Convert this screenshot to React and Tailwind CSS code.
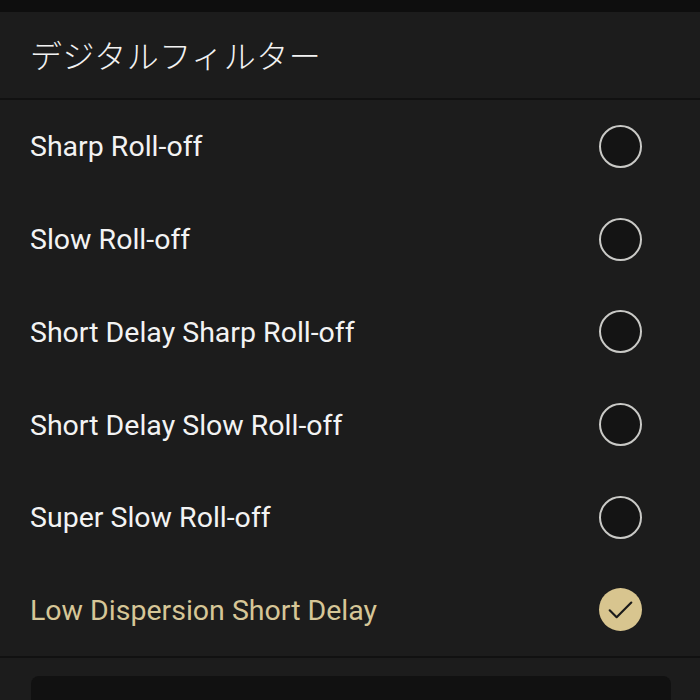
const FILTERS = [
  'Sharp Roll-off',
  'Slow Roll-off',
  'Short Delay Sharp Roll-off',
  'Short Delay Slow Roll-off',
  'Super Slow Roll-off',
  'Low Dispersion Short Delay',
]

function Radio({ checked }) {
  if (checked) {
    return (
      <div className="w-[43px] h-[43px] rounded-full bg-[#d8c58f] flex items-center justify-center">
        <svg width="37" height="37" viewBox="0 0 24 24" fill="none" stroke="#1a1a1a" strokeWidth="1.4" strokeLinecap="round" strokeLinejoin="round">
          <path d="M5 12.5l4.5 4.5L19 7.5" />
        </svg>
      </div>
    )
  }
  return <div className="w-[43px] h-[43px] rounded-full border-2 border-[#c9c9c6] bg-[#141414]" />
}

export default function App() {
  const selected = 5
  return (
    <div className="w-[700px] h-[700px] bg-[#0e0e0e] overflow-hidden font-['Roboto','Noto_Sans_CJK_JP',sans-serif]">
      <div className="h-[12px]" />
      <div className="bg-[#1c1c1c] h-[688px] flex flex-col">
        <div className="h-[88px] shrink-0 flex items-center px-[30px] pb-[3px] border-b-2 border-[#111111]">
          <span className="text-[32px] text-[#f2f2f2] font-light tracking-[0.5px] font-['Noto_Sans_CJK_JP',sans-serif]">デジタルフィルター</span>
        </div>
        <div className="flex flex-col shrink-0">
          {FILTERS.map((f, i) => (
            <div key={f} className="h-[92.7px] shrink-0 flex items-center justify-between pl-[30px] pr-[58px]">
              <span className={`text-[28.5px] pt-[3px] ${i === selected ? 'text-[#d6c697]' : 'text-[#f3f3f3]'}`}>{f}</span>
              <Radio checked={i === selected} />
            </div>
          ))}
        </div>
        <div className="shrink-0 border-t-2 border-[#111111] pt-[18px] px-[31px]">
          <div className="h-[40px] bg-[#111111] rounded-t-[8px] w-[640px]" />
        </div>
      </div>
    </div>
  )
}
